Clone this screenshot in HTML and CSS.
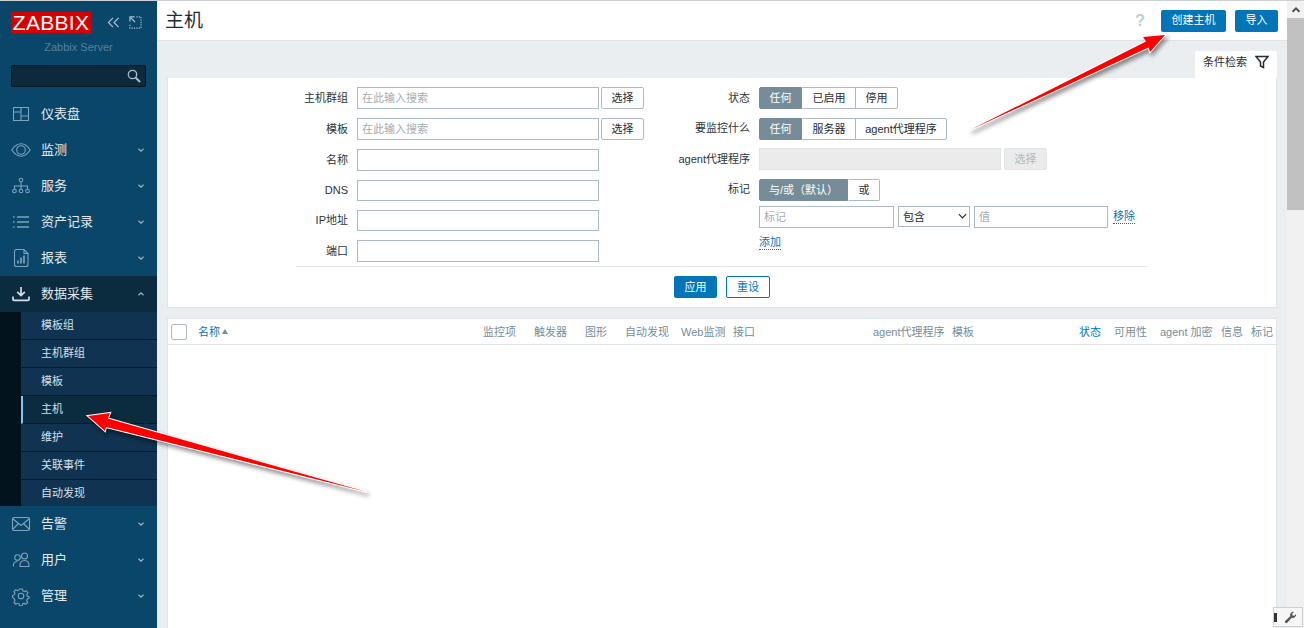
FILE: index.html
```html
<!DOCTYPE html>
<html lang="zh">
<head>
<meta charset="utf-8">
<title>主机</title>
<link rel="stylesheet" href="styles.css">
</head>
<body>
<div class="app">
  <aside class="sidebar">
    <div class="brand">
      <span class="logo">ZABBIX</span>
      <div class="brand-tools">
        <svg class="tool" viewBox="0 0 14 14"><path d="M6.500 2 1.500 7l5 5M12.500 2l-5 5 5 5"/></svg>
        <svg class="tool" viewBox="0 0 14 14"><path d="M1 6V1h5M2 2l4.500 4.500" class="solid"/><path d="M8 1h5v12H1V8" class="dots"/></svg>
      </div>
    </div>
    <div class="server">Zabbix Server</div>
    <div class="search">
      <svg class="search-icon" viewBox="0 0 14 14"><circle cx="5.500" cy="5.500" r="4.200"/><path d="m8.500 8.500 4.500 4.500" class="thick"/></svg>
    </div>
    <nav class="nav">
      <a class="item"><svg class="ico" viewBox="0 0 20 20"><path d="M2.500 3.500h15v13h-15zM10 3.500v13M2.500 8h7.500M10 12h7.500"/></svg><span>仪表盘</span></a>
      <a class="item"><svg class="ico" viewBox="0 0 20 20"><path d="M.8 10C3.500 6 6.500 3.800 10 3.800S16.500 6 19.200 10c-2.700 4-5.700 6.200-9.200 6.200S3.500 14 .8 10z"/><circle cx="10" cy="10" r="4.300"/></svg><span>监测</span><svg class="chev" viewBox="0 0 8 8"><path d="m1.500 2.800 2.500 2.400 2.500-2.400"/></svg></a>
      <a class="item"><svg class="ico" viewBox="0 0 20 20"><circle cx="10" cy="4" r="1.800"/><circle cx="3.500" cy="15" r="1.800"/><circle cx="10" cy="15" r="1.800"/><circle cx="16.500" cy="15" r="1.800"/><path d="M10 6v7M3.500 13v-3h13v3"/></svg><span>服务</span><svg class="chev" viewBox="0 0 8 8"><path d="m1.500 2.800 2.500 2.400 2.500-2.400"/></svg></a>
      <a class="item"><svg class="ico" viewBox="0 0 20 20"><path d="M6 5h12M6 10h12M6 15h12M2 5h1.500M2 10h1.500M2 15h1.500" class="thick"/></svg><span>资产记录</span><svg class="chev" viewBox="0 0 8 8"><path d="m1.500 2.800 2.500 2.400 2.500-2.400"/></svg></a>
      <a class="item"><svg class="ico" viewBox="0 0 20 20"><path d="M3.500 3.500q0-2 2-2h7.500l4 4v11q0 2-2 2h-9.500q-2 0-2-2zM13 1.500v4h4"/><path d="M7 15.500v-3M10 15.500v-6M13 15.500v-8" class="thick"/></svg><span>报表</span><svg class="chev" viewBox="0 0 8 8"><path d="m1.500 2.800 2.500 2.400 2.500-2.400"/></svg></a>
      <a class="item open"><svg class="ico light" viewBox="0 0 20 20"><path d="M10 3v8M6.200 7.800 10 11.500l3.800-3.700" class="thick"/><path d="M2 12.500v2.800q0 1 1 1h14q1 0 1-1v-2.800" class="thick"/></svg><span>数据采集</span><svg class="chev" viewBox="0 0 8 8"><path d="m1.500 5.200 2.500-2.400 2.500 2.400"/></svg></a>
      <div class="sub">
        <a class="sub-item">模板组</a>
        <a class="sub-item">主机群组</a>
        <a class="sub-item">模板</a>
        <a class="sub-item active">主机</a>
        <a class="sub-item">维护</a>
        <a class="sub-item">关联事件</a>
        <a class="sub-item last">自动发现</a>
      </div>
      <a class="item"><svg class="ico" viewBox="0 0 20 20"><rect x="1.500" y="3.500" width="17" height="13" rx="1.500"/><path d="m1.500 4.500 8.500 7 8.500-7M1.500 15.500l6-6M18.500 15.500l-6-6"/></svg><span>告警</span><svg class="chev" viewBox="0 0 8 8"><path d="m1.500 2.800 2.500 2.400 2.500-2.400"/></svg></a>
      <a class="item"><svg class="ico" viewBox="0 0 20 20"><circle cx="6.500" cy="7.500" r="2.800"/><circle cx="13.500" cy="6" r="3"/><path d="M2.500 16.500q-.8-4.500 4-5.200M9 16.500c-.5-3.500 1.500-6 4.500-6s5 2.500 4.500 6z"/></svg><span>用户</span><svg class="chev" viewBox="0 0 8 8"><path d="m1.500 2.800 2.500 2.400 2.500-2.400"/></svg></a>
      <a class="item"><svg class="ico" viewBox="0 0 20 20"><circle cx="10" cy="10" r="2.800"/><path d="M8.600 3h2.800l.5 1.900 1.500.7 1.800-.9 1.700 2-1.100 1.600.4 1.700 1.800.7v1.600l-1.800.8-.5 1.600 1 1.700-1.900 1.800-1.700-1-1.500.7-.5 1.800H8.600l-.6-1.800-1.500-.6-1.700.9-1.800-1.900 1-1.700-.6-1.500L1.500 11V9.500l1.900-.8.500-1.600-1-1.600 1.900-1.900 1.700 1 1.500-.7z"/></svg><span>管理</span><svg class="chev" viewBox="0 0 8 8"><path d="m1.500 2.800 2.500 2.400 2.500-2.400"/></svg></a>
    </nav>
  </aside>

  <main class="main">
    <header class="top">
      <h1 class="title">主机</h1>
      <div class="top-actions">
        <span class="help">?</span>
        <button class="btn primary create">创建主机</button>
        <button class="btn primary import">导入</button>
      </div>
    </header>

    <div class="content">
      <div class="tab-row">
        <div class="tab">条件检索
          <svg class="funnel" viewBox="0 0 14 14"><path d="M1 1.500h12L8.500 7v5.500l-3-1.500V7z"/></svg>
        </div>
      </div>

      <section class="filter">
        <div class="filter-inner">
          <div class="form">
            <div class="grid-left">
              <label class="lbl">主机群组</label>
              <div class="field"><input class="inp wide" placeholder="在此输入搜索"><button class="btn plain pick">选择</button></div>
              <label class="lbl">模板</label>
              <div class="field"><input class="inp wide" placeholder="在此输入搜索"><button class="btn plain pick">选择</button></div>
              <label class="lbl">名称</label>
              <div class="field"><input class="inp wide"></div>
              <label class="lbl">DNS</label>
              <div class="field"><input class="inp wide"></div>
              <label class="lbl">IP地址</label>
              <div class="field"><input class="inp wide"></div>
              <label class="lbl">端口</label>
              <div class="field"><input class="inp wide"></div>
            </div>
            <div class="grid-right">
              <label class="lbl">状态</label>
              <div class="seg"><span class="on s43">任何</span><span class="s53">已启用</span><span class="s43">停用</span></div>
              <label class="lbl">要监控什么</label>
              <div class="seg"><span class="on s43">任何</span><span class="s53">服务器</span><span class="s91">agent代理程序</span></div>
              <label class="lbl">agent代理程序</label>
              <div class="field gap3"><input class="inp wide off" disabled><button class="btn plain pick dis">选择</button></div>
              <label class="lbl">标记</label>
              <div class="seg"><span class="on s89">与/或（默认）</span><span class="s32">或</span></div>
              <span></span>
              <div class="tags">
                <input class="inp tag" placeholder="标记">
                <div class="sel-wrap">
                  <select class="inp sel"><option>包含</option></select>
                  <svg class="sel-chev" viewBox="0 0 10 6"><path d="m1 1 4 4 4-4"/></svg>
                </div>
                <input class="inp tag val" placeholder="值">
                <a class="link rm">移除</a>
              </div>
              <span></span>
              <div class="add"><a class="link">添加</a></div>
            </div>
          </div>
          <div class="actions">
            <button class="btn primary apply">应用</button>
            <button class="btn outline reset">重设</button>
          </div>
        </div>
      </section>

      <section class="table">
        <div class="thead">
          <span class="check-cell"><span class="check"></span></span>
          <span class="sort">名称<i class="tri"></i></span>
          <span>监控项</span>
          <span>触发器</span>
          <span>图形</span>
          <span>自动发现</span>
          <span>Web监测</span>
          <span>接口</span>
          <span>agent代理程序</span>
          <span>模板</span>
          <span class="sort">状态</span>
          <span>可用性</span>
          <span>agent 加密</span>
          <span>信息</span>
          <span>标记</span>
        </div>
      </section>
    </div>
  </main>

  <div class="scrollbar">
    <div class="sb-up"><svg viewBox="0 0 10 10"><path d="m1.500 6.800 3.500-3.500 3.500 3.500"/></svg></div>
    <div class="sb-thumb"></div>
  </div>
</div>

<div class="debug-box">
  <span class="clip"></span>
  <svg viewBox="0 0 14 14"><path d="M13 3.300a3.600 3.600 0 0 1-4.700 4L3.500 12.600a1.400 1.400 0 0 1-2.100-2L6.700 5.700a3.600 3.600 0 0 1 4-4.700L8.800 3l.4 1.800 1.800.4z"/></svg>
</div>

<svg class="arrows" viewBox="0 0 1304 628">
  <polygon points="88,416 110,413 108,418.500 367,492 106,427 105,431"/>
  <polygon points="1165,35 1143,37 1146,41.500 970,130 1148.500,47.500 1150,52"/>
</svg>
</body>
</html>
```

FILE: styles.css
```css
* { box-sizing: border-box; }
html, body { margin: 0; height: 100%; overflow: hidden; }
body {
  background: #ebeef0;
  border-top: 1px solid #cfd2d4;
  font: 11px/14px "Liberation Sans", "Noto Sans CJK SC", sans-serif;
  color: #1f2c33;
}
a { cursor: pointer; }
button, input, select { font: inherit; margin: 0; }

.app { display: flex; height: 627px; }

/* sidebar */
.sidebar { width: 157px; flex: none; background: #0a466a; color: #e4e9ec; }
.brand { display: flex; align-items: center; padding: 11px 0 0 11px; height: 32px; }
.logo {
  width: 80px; height: 21px; background: #d40000; color: #fff;
  font-size: 21px; line-height: 21px; text-align: center; letter-spacing: .3px;
}
.brand-tools { display: flex; gap: 9px; margin-left: 16px; }
.tool { width: 13px; height: 13px; fill: none; stroke: #a9c2d3; stroke-width: 1.300; }
.tool .dots { stroke-dasharray: 1.300 1.300; stroke-width: 1.200; }
.server { margin-top: 7px; text-align: center; color: #56819e; height: 14px; }
.search {
  display: flex; justify-content: flex-end; align-items: center;
  width: 135px; height: 22px; margin: 11px 0 0 11px; padding-right: 4px;
  background: #0d2a3c; border: 1px solid #05161f; border-radius: 2px;
}
.search-icon { width: 14px; height: 14px; fill: none; stroke: #a8bccb; stroke-width: 1.300; }
.search-icon .thick { stroke-width: 2; }

.nav { margin-top: 9px; }
.item { display: flex; align-items: center; height: 36px; padding-left: 11px; font-size: 13px; color: #e4e9ec; }
.item > span { margin-left: 10px; flex: 1; }
.ico { width: 20px; height: 20px; flex: none; fill: none; stroke: #7ea3bd; stroke-width: 1.100; }
.ico .thick { stroke-width: 1.700; }
.ico.light { stroke: #d5e0e8; }
.chev { width: 8px; height: 8px; margin-right: 12px; fill: none; stroke: #9db6c7; stroke-width: 1.200; }
.open { background: #0b2b3f; }

.sub { background: #03131d; padding-left: 21px; }
.sub-item {
  display: flex; align-items: center; height: 28px; padding: 0 0 1px 20px;
  background: #0f3351; border-bottom: 1px solid #07192a; color: #d8e0e6; font-size: 11px;
}
.sub-item.active { background: #0b2b3f; border-left: 2px solid #7fc5f5; padding-left: 18px; }
.sub-item.last { height: 26px; border-bottom: 0; }

/* main */
.main { width: 1130px; flex: none; display: flex; flex-direction: column; }
.top {
  display: flex; align-items: center; justify-content: space-between;
  height: 40px; padding: 0 9px 0 8px; background: #fff; border-bottom: 1px solid #e0e4e7;
}
.title { margin: 0; font-size: 19px; font-weight: 400; line-height: 40px; color: #1f2c33; }
.top-actions { display: flex; align-items: center; }
.help { font-size: 16px; font-weight: 700; color: #c3ccd2; margin-right: 16px; }
.btn { height: 22px; padding: 0; border-radius: 2px; border: 1px solid transparent; font-size: 11px; line-height: 1; }
.primary { background: #0275b8; color: #fff; }
.create { width: 65px; }
.import { width: 43px; margin-left: 9px; }

.content { flex: 1; padding: 0 10px; display: flex; flex-direction: column; min-height: 0; }
.tab-row { display: flex; justify-content: flex-end; margin-top: 10px; }
.tab {
  display: flex; align-items: flex-start; width: 82px; height: 27px; padding: 4px 0 0 8px;
  background: #fff; border-radius: 2px 2px 0 0;
}
.funnel { width: 14px; height: 14px; margin-left: 8px; fill: none; stroke: #1f2c33; stroke-width: 1.500; }

.filter {
  height: 230px; flex: none; background: #fff;
  border: 1px solid #e0e4e7; border-top: 0;
}
.filter-inner { width: 852px; margin: 0 auto; padding-top: 9px; }
.form { display: flex; height: 180px; border-bottom: 1px solid #e6e9eb; }
.grid-left {
  display: grid; width: 364px; column-gap: 9px; row-gap: 9px;
  grid-template-columns: 52px auto;
  grid-template-rows: 22px 22px 22px 21px 21px 22px;
  align-content: start;
}
.grid-right {
  display: grid; column-gap: 9px; row-gap: 8.500px;
  grid-template-columns: 90px auto;
  grid-template-rows: 22px 22px 22px 22px;
  grid-auto-rows: auto;
  align-content: start;
}
.lbl { display: flex; align-items: center; justify-content: flex-end; white-space: nowrap; color: #2a353a; padding-bottom: 1px; }
.field { display: flex; gap: 2px; }
.field.gap3 { gap: 3px; }
.inp { height: 100%; border: 1px solid #acbbc2; background: #fff; border-radius: 0; padding: 0 4px; color: #1f2c33; outline: none; }
.inp::placeholder { color: #a4acb1; opacity: 1; }
.wide { width: 242px; }
.off { background: #ebebeb; border-color: #dfe4e7; }
.plain { background: #fff; border-color: #acbbc2; color: #1f2c33; width: 43px; }
.dis { background: #ebebeb; border-color: #dfe4e7; color: #acbbc2; }

.seg { display: flex; }
.seg span {
  display: flex; align-items: center; justify-content: center; height: 22px;
  background: #fff; border: 1px solid #acbbc2; margin-left: -1px; color: #1f2c33;
}
.seg span:first-child { margin-left: 0; border-radius: 2px 0 0 2px; }
.seg span:last-child { border-radius: 0 2px 2px 0; }
.seg .on { background: #768d99; border-color: #768d99; color: #fff; }
.seg .on + span { margin-left: 0; border-left-color: #fff; }
.s43 { width: 43px; }
.s53 { width: 54px; }
.s91 { width: 92px; }
.s89 { width: 89px; }
.s32 { width: 32px; }

.tags { display: flex; align-items: center; height: 22px; margin-top: -3.500px; }
.tag { width: 135px; height: 22px; }
.tag.val { width: 134px; }
.sel-wrap { position: relative; width: 72px; height: 21px; margin: 0 4px; }
.sel { width: 100%; height: 21px; padding: 0 0 0 4px; appearance: none; -webkit-appearance: none; }
.sel-chev { position: absolute; right: 3px; top: 7px; width: 9px; height: 6px; fill: none; stroke: #1f2c33; stroke-width: 1.300; pointer-events: none; }
.link { color: #0275b8; border-bottom: 1px dotted #0275b8; line-height: 12px; height: 14px; }
.rm { margin-left: 5px; }
.add { display: flex; }

.actions { display: flex; justify-content: center; gap: 9px; margin-top: 9px; }
.apply { width: 43px; }
.outline { width: 44px; background: #fff; border-color: #0275b8; color: #0275b8; }

.table { flex: 1; margin-top: 10px; background: #fff; border: 1px solid #e0e4e7; border-bottom: 0; }
.thead {
  display: grid; align-items: center; height: 26px; color: #768d99; white-space: nowrap;
  border-bottom: 1px solid #dfe4e7;
  grid-template-columns: 30px 285px 51px 51px 40px 56px 52px 140px 79px 127px 35px 46px 61px 30px 1fr;
}
.check-cell { display: flex; padding-left: 3px; }
.check { width: 16px; height: 16px; border: 1px solid #acbbc2; border-radius: 2px; background: #fff; }
.sort { color: #0275b8; display: flex; align-items: center; }
.tri { width: 0; height: 0; margin-left: 2px; border: 3px solid transparent; border-top: 0; border-bottom: 5px solid #768d99; }

/* browser furniture */
.scrollbar { width: 17px; flex: none; background: #f1f1f1; display: flex; flex-direction: column; }
.sb-up { display: flex; align-items: center; justify-content: center; height: 17px; background: #f1f1f1; }
.sb-up svg { width: 10px; height: 10px; fill: none; stroke: #505050; stroke-width: 2; }
.sb-thumb { height: 192px; background: #c1c1c1; }

/* overlays */
.debug-box {
  position: absolute; left: 1273px; top: 607px; width: 30px; height: 20px;
  display: flex; align-items: center; justify-content: flex-end; padding-right: 5px;
  background: #f6f6f6; border: 1px solid #d0d0d0; overflow: hidden;
}
.debug-box svg { width: 13px; height: 13px; fill: #555; }
.clip { position: absolute; left: 0; top: 5px; width: 3px; height: 9px; background: #333; }

.arrows {
  position: absolute; left: 0; top: 0; width: 1304px; height: 628px; pointer-events: none;
  filter: drop-shadow(2px 3px 2px rgba(0,0,0,.45));
}
.arrows polygon { fill: #f00; stroke: #fff; stroke-width: 2; paint-order: stroke; stroke-linejoin: miter; }
```
